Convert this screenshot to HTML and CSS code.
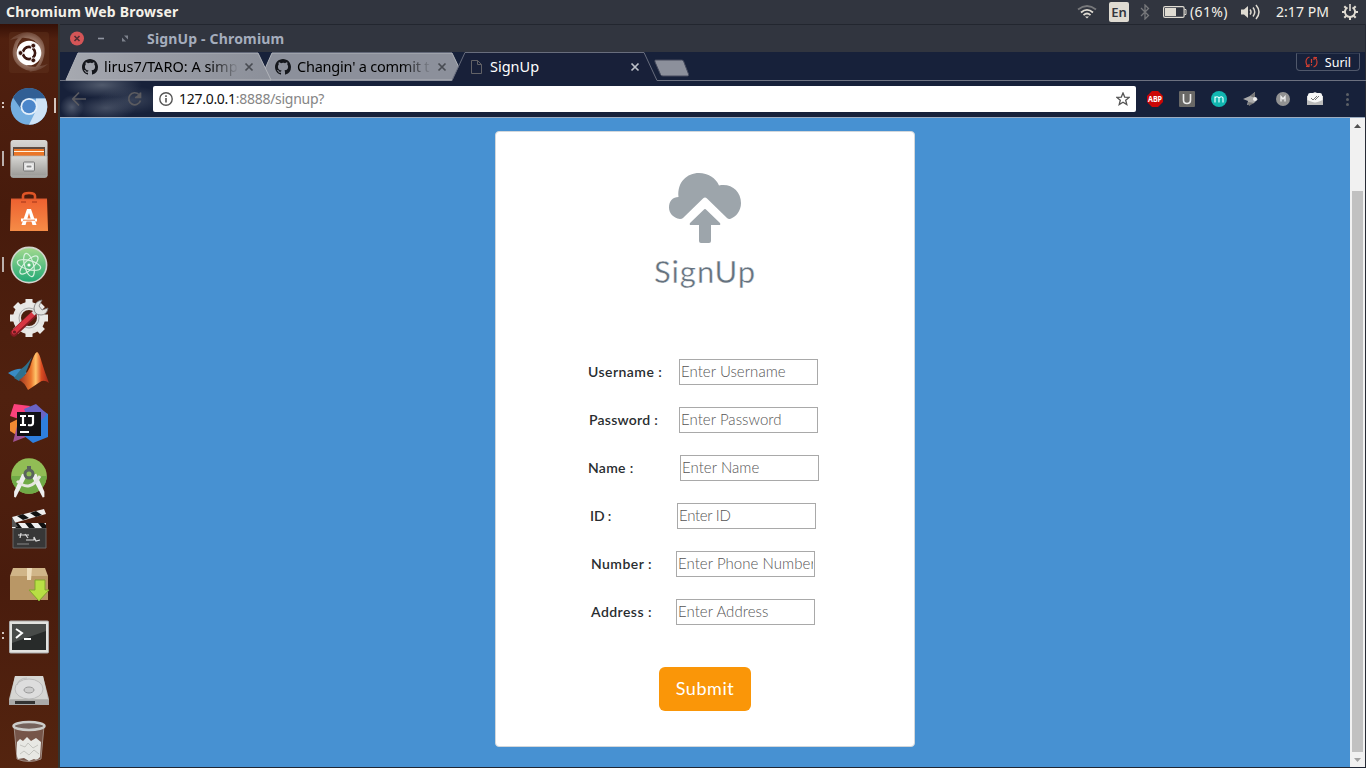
FILE: index.html
```html
<!DOCTYPE html>
<html lang="en">
<head>
<meta charset="utf-8">
<title>SignUp</title>
<link rel="stylesheet" href="styles.css">
</head>
<body>
<div class="desktop">
  <header class="panel">
    <span class="panel-title">Chromium Web Browser</span>
    <div class="tray">
      <svg class="tray-wifi" width="20" height="14" viewBox="0 0 20 14" fill="none" stroke-width="1.8"><path d="M1 4.5Q10-2.5 19 4.5" stroke="#77787b"/><path d="M4 7.5Q10 2.2 16 7.5M6.5 10.1Q10 7 13.500 10.100" stroke="#dfdbd2"/><path d="M8 11.500h4L10 13.500z" fill="#dfdbd2"/></svg>
      <span class="lang">En</span>
      <svg class="tray-bt" width="10" height="16" viewBox="0 0 10 16" fill="none" stroke="#77787b" stroke-width="1.300"><path d="M1 4l7.500 7.500L5 15V1l3.500 3.500L1 12"/></svg>
      <svg class="tray-bat" width="24" height="12" viewBox="0 0 24 12"><rect x=".6" y=".6" width="20.500" height="10.800" rx="1.500" fill="none" stroke="#dfdbd2" stroke-width="1.200"/><path d="M2 2h11v8H2z" fill="#dfdbd2"/><path d="M21.500 3.500H23v5h-1.500" fill="none" stroke="#dfdbd2"/></svg>
      <span class="percent">(61%)</span>
      <svg class="tray-vol" width="20" height="16" viewBox="0 0 20 16" fill="none" stroke="#dfdbd2" stroke-width="1.500"><path d="M0 5.500h3L7 2v12L3 10.500H0z" fill="#dfdbd2" stroke="none"/><path d="M9 5.500q2 2.500 0 5M12 3.500q3.500 4.500 0 9M15 1q6 7 0 14"/></svg>
      <span class="clock">2:17 PM</span>
      <svg class="tray-gear" width="16" height="16" viewBox="0 0 16 16" fill="none" stroke="#dfdbd2"><path d="M5.500 3.500a5.100 5.100 0 1 0 5 0" stroke-width="2"/><path d="M8 0v7" stroke-width="1.600"/><path d="M0 8h3M13 8h3M8 13v3M2.300 2.300l2 2M13.700 2.300l-2 2M2.300 13.700l2-2M13.700 13.700l-2-2" stroke-width="2"/></svg>
    </div>
  </header>

  <div class="workspace">
    <nav class="dock">
      <svg viewBox="0 0 60 53"><defs><radialGradient id="swirl"><stop offset=".5" stop-color="#b79989"/><stop offset="1" stop-color="#704838"/></radialGradient></defs><rect x="9" y="6" width="40" height="41" rx="3" fill="#653721" opacity=".4"/><path d="M10 14Q25 1 38 10Q48 18 43 34Q40 44 29 46Q44 37 40 22Q34 7 10 14M48 38Q34 50 22 42Q9 34 14 19Q17 9 28 7Q13 17 18 31Q25 46 48 38" fill="url(#swirl)" opacity=".9"/><circle cx="29" cy="27" r="12.300" fill="#fff"/><circle cx="29" cy="27" r="6" fill="none" stroke="#3b1710" stroke-width="2.800"/><path d="M29 27L21 27M29 27l4-7M29 27l4 7" stroke="#fff" stroke-width="1.300"/><circle cx="29" cy="27" r="4.500" fill="#fff"/><g fill="#3b1710" stroke="#fff" stroke-width=".8"><circle cx="20.500" cy="27" r="2.400"/><circle cx="33.300" cy="19.700" r="2.400"/><circle cx="33.300" cy="34.300" r="2.400"/></g></svg>
      <svg viewBox="0 0 60 53"><circle cx="29" cy="27.500" r="18.300" fill="#74aee0"/><path d="M13 18.500A18.300 18.300 0 0 1 45.500 19.500H29L22 31.500z" fill="#315f94"/><path d="M45.500 19.500A18.300 18.300 0 0 1 29 45.700L36 31.500V19.500z" fill="#cfe3f6"/><circle cx="29" cy="27.500" r="8.600" fill="#e4effa"/><circle cx="29" cy="27.500" r="6.800" fill="#4b86ca"/><path d="M2 23h2v2H2zM2 27h2v2H2zM54 19h2v15h-2z" fill="#d3c5be"/></svg>
      <svg viewBox="0 0 60 53"><defs><linearGradient id="metal" x2="0" y2="1"><stop stop-color="#d8d7d4"/><stop offset="1" stop-color="#9b9a97"/></linearGradient></defs><rect x="10.500" y="8" width="37" height="38" rx="3" fill="url(#metal)"/><path d="M13 15h32v9H13z" fill="#5d4b42"/><path d="M14 17h30v2H14zM14 20h30v5H14z" fill="#ea7628"/><path d="M14 19.500h30" stroke="#fff2df"/><path d="M11 24h36v20H11z" fill="url(#metal)" stroke="#b5b5b2" stroke-width=".7"/><rect x="23.500" y="30" width="11" height="9" rx="1" fill="#ddd" stroke="#777"/><path d="M26 33h6v3h-6z" fill="#888" stroke="#fff"/><path d="M2 19h2v15H2z" fill="#bbb0ac"/></svg>
      <svg viewBox="0 0 60 53"><defs><linearGradient id="bag" x2="0" y2="1"><stop stop-color="#ee6130"/><stop offset="1" stop-color="#f58c47"/></linearGradient></defs><path d="M23 16V11q0-3 6-3t6 3v5" fill="none" stroke="#df5527" stroke-width="2.600"/><path d="M11 14h36l1 32H10z" fill="url(#bag)"/><path d="M11 14h36" stroke="#d55930"/><path d="M21 17h5M32 17h5" stroke="#bc4422" stroke-width="1.500"/><path d="M21.500 40l5.500-16h4l5.500 16h-4L29 28l-3.500 12z" fill="#fff"/><path d="M21 35h16" stroke="#fff" stroke-width="3"/><path d="M23 35.200h12" stroke="#f07b40"/></svg>
      <svg viewBox="0 0 60 53"><defs><linearGradient id="atom" x2="0" y2="1"><stop stop-color="#a3da8f"/><stop offset="1" stop-color="#20a875"/></linearGradient></defs><circle cx="29" cy="27" r="17.600" fill="url(#atom)" stroke="#d3d5ce" stroke-width="1.600"/><g fill="none" stroke="#d8f1df" stroke-width="1.200"><ellipse cx="29" cy="27" rx="12" ry="4.500" transform="rotate(15 29 27)"/><ellipse cx="29" cy="27" rx="12" ry="4.500" transform="rotate(75 29 27)"/><ellipse cx="29" cy="27" rx="12" ry="4.500" transform="rotate(135 29 27)"/></g><circle cx="29" cy="27" r="1.600" fill="#fff"/><path d="M2 19h2v15H2z" fill="#bbb0ac"/></svg>
      <svg viewBox="0 0 60 53"><circle cx="29" cy="27" r="12" fill="none" stroke="#e5e5e3" stroke-width="8"/><path d="M25.500 8h7v8h-7zM25.500 38h7v8h-7zM10 23.500h8v7h-8zM40 23.500h8v7h-8z" fill="#e9e9e7"/><path d="M25.500 8h7v8h-7zM25.500 38h7v8h-7zM10 23.500h8v7h-8zM40 23.500h8v7h-8z" fill="#e9e9e7" transform="rotate(45 29 27)"/><circle cx="29" cy="27" r="10" fill="none" stroke="#aaa"/><path d="M14 42L33 24" stroke="#851b22" stroke-width="7" stroke-linecap="round"/><path d="M14 41L33 23" stroke="#d73542" stroke-width="4.500" stroke-linecap="round"/><path d="M33 23l6-6" stroke="#d5d5d2" stroke-width="4"/><path d="M42 9l-3 6 3 4 6-2q-1 7-7 7-7 0-7-7 1-7 8-8" fill="#e2e2df" stroke="#777" stroke-width=".8"/><circle cx="14.500" cy="41" r="1.600" fill="#6d1b20"/></svg>
      <svg viewBox="0 0 60 53"><defs><linearGradient id="peak"><stop stop-color="#9b3422"/><stop offset=".4" stop-color="#eb762d"/><stop offset=".56" stop-color="#ffc36a"/><stop offset=".75" stop-color="#db4d22"/><stop offset="1" stop-color="#9a251c"/></linearGradient></defs><path d="M8 29q9-5 14-4l5 4-8 7z" fill="#398bc4"/><path d="M21 25q5-3 11-12l-8 20-5 4-5-3z" fill="#2f718e"/><path d="M19 36q7-4 11-13 4-14 7-15 2 0 5 11 3 10 7 20-5-4-9-1L28 46q-4-8-9-10" fill="url(#peak)"/></svg>
      <svg viewBox="0 0 60 53"><path d="M14 7l16 2-8 14-12-4z" fill="#fa427c"/><path d="M10 26l14-7-6 20-8-5z" fill="#f38a32"/><path d="M13 45l5-20 13 13z" fill="#9e5293"/><path d="M34 8l14 9v23l-15 6-10-8z" fill="#2e7fdf"/><path d="M36 7l11 10-14 16-9-21z" fill="#6963c5"/><path d="M17 15h24v24H17z" fill="#101014"/><g fill="none" stroke="#fff" stroke-width="2.200"><path d="M20 19h6M23 19v9M20 28h6M28 19h5v7q0 3-5 2"/></g><path d="M20 34h9v2h-9z" fill="#fff"/></svg>
      <svg viewBox="0 0 60 53"><circle cx="29" cy="26" r="17.800" fill="#91bd55"/><path d="M11.200 26a17.800 17.800 0 0 0 35.600 0z" fill="#70aa47"/><path d="M25.500 26L15 47v-5l8-18M32.500 26l11 21v-5l-8-18" fill="#eee" stroke="#eee" stroke-width="1.800"/><path d="M17 31q13 12 23-5" fill="none" stroke="#e6e6df" stroke-width="3"/><circle cx="29" cy="24" r="4" fill="none" stroke="#5a625d" stroke-width="3"/><path d="M27 16h4v5h-4z" fill="#5a625d"/></svg>
      <svg viewBox="0 0 60 53"><path d="M13 25h33v20H13z" fill="#373737" stroke="#666"/><path d="M12 20h34v5H12z" fill="#eee"/><path d="M12 20l4 5h6l-4-5M25 20l4 5h6l-4-5M38 20l4 5h4v-3l-2-2" fill="#111"/><path d="M12 14l32-8 2 5-32 9z" fill="#eee"/><path d="M17 13l6 4 6-2-6-4M30 10l6 4 6-2-6-4" fill="#111"/><path d="M12 14l6 10h-6z" fill="#555"/><path d="M18 32h11M21 30l-1 5M25 31l3 4M26 37h8v-3l2 4 4-1" stroke="#ddd" fill="none" stroke-width="1.200"/><path d="M17 41h12" stroke="#888"/></svg>
      <svg class="installer" viewBox="0 0 60 53"><path d="M10 16h38v24H10z" fill="#b99766"/><path d="M13 8h32l3 8H10z" fill="#d0b588"/><path d="M27 8h5l-1 12h-4z" fill="#eddcba"/><path d="M35 20h10v10h4L39 41 29 30h6z" fill="#b8df44" stroke="#81a52d"/></svg>
      <svg viewBox="0 0 60 53"><rect x="9.500" y="12" width="39" height="32" rx="1" fill="#e2e2df" stroke="#aaa"/><path d="M12 15h34v26H12z" fill="#282b2a"/><path d="M12 15h34v7L12 34z" fill="#484b49"/><path d="M16 20l6 4-6 5M24 30h7" fill="none" stroke="#fff" stroke-width="2"/><path d="M2 23h2v2H2zM2 28h2v2H2z" fill="#d3c5be"/></svg>
      <svg viewBox="0 0 60 53"><path d="M15 14h28l6 23v6H9v-6z" fill="#b6b6b3"/><path d="M15 14h28l5 23H10z" fill="#d6d6d3"/><path d="M9 38h40v5H9z" fill="#aaa"/><path d="M15 39h20v3H15z" fill="#333"/><ellipse cx="29" cy="27" rx="14" ry="10" fill="#ddd" stroke="#bbb"/><ellipse cx="29" cy="28" rx="5" ry="3" fill="#ccc" stroke="#999"/><path d="M17 23q2-7 10-7" fill="none" stroke="#bbb"/></svg>
      <svg viewBox="0 0 60 53"><path d="M14 11l3 33q12 5 24 0l3-33" fill="#765549" stroke="#9f8c83"/><path d="M17 27l3-3 3 2 4-4 4 4 5-3 5 4-1 15q-3 4-6 2l-5 2-5-3-6 1q-2-2-1-17" fill="#e8e8e4"/><path d="M20 30l5 2 3-4 5 5 5-3M20 39l4-3 5 4 5-5 5 4" fill="none" stroke="#c4c4bf"/><ellipse cx="29" cy="11" rx="15.500" ry="4" fill="#75625b" stroke="#cdcdca" stroke-width="2.500"/></svg>
    </nav>

    <main class="window">
      <div class="titlebar">
        <svg class="window-controls" width="60" height="16" viewBox="0 0 60 16"><circle cx="7" cy="7.500" r="7" fill="#d45557"/><path d="M4.500 5l5 5M9.500 5l-5 5" stroke="#512e34" stroke-width="1.600"/><path d="M28 7.500h6" stroke="#9095a0" stroke-width="1.600"/><path d="M54 4.500h4v4zM52 6.500v4h4z" fill="#7d828c"/></svg>
        <span class="window-title">SignUp - Chromium</span>
      </div>
      <div class="tabstrip">
        <svg class="tab-shapes" width="1306" height="29" viewBox="0 0 1306 29"><defs><linearGradient id="tabfill"><stop stop-color="#a6a9b0"/><stop offset=".35" stop-color="#9a9da6"/><stop offset="1" stop-color="#8c909a"/></linearGradient></defs><path d="M0 28.500h392M597 28.500h709" stroke="#6c7180"/><path d="M200 28L212 1h180l13 27z" fill="#8c909b" stroke="#b0b3b9"/><path d="M6 28L18 1h180l13 27z" fill="url(#tabfill)" stroke="#b0b3b9"/><path d="M392 29L405 .5h179L597 29z" fill="#182039"/><path d="M392 28.500L405 .5h179l13 28" fill="none" stroke="#686d7d"/><path d="M595.500 8h26q1.500 0 2 1l5 13q.5 2-1 2H603q-2 0-2.500-1.500L595 10q-.5-2 .5-2" fill="#8c909b" stroke="#464b5d"/></svg>
        <div class="tab tab-one"><svg width="16" height="16" viewBox="0 0 16 16"><path fill="#15171c" d="M8 0C3.580 0 0 3.580 0 8c0 3.540 2.290 6.530 5.470 7.590.4.070.55-.17.55-.38v-1.490c-2.010.37-2.530-.49-2.690-.94-.09-.23-.48-.94-.82-1.130-.28-.15-.68-.52-.01-.53.63-.01 1.080.58 1.230.82.72 1.210 1.870.87 2.330.66.070-.52.280-.87.510-1.070-1.780-.2-3.640-.89-3.640-3.950 0-.87.310-1.590.82-2.150-.08-.2-.36-1.020.08-2.120 0 0 .67-.21 2.200.82A7.600 7.600 0 0 1 8 3.860c.68 0 1.360.09 2 .27 1.530-1.040 2.200-.82 2.200-.82.44 1.100.16 1.920.08 2.120.51.56.82 1.270.82 2.150 0 3.070-1.870 3.750-3.650 3.950.29.250.54.730.54 1.480v2.200c0 .21.150.46.550.38A8 8 0 0 0 16 8c0-4.420-3.580-8-8-8z"/></svg><span class="tab-label fade">lirus7/TARO: A simp</span><svg class="tab-close" width="10" height="10" viewBox="0 0 10 10"><path d="M1.500 1.500l7 7M8.500 1.500l-7 7"/></svg></div>
        <div class="tab tab-two"><svg width="16" height="16" viewBox="0 0 16 16"><path fill="#15171c" d="M8 0C3.580 0 0 3.580 0 8c0 3.540 2.290 6.530 5.470 7.590.4.070.55-.17.55-.38v-1.490c-2.010.37-2.530-.49-2.690-.94-.09-.23-.48-.94-.82-1.130-.28-.15-.68-.52-.01-.53.63-.01 1.080.58 1.230.82.72 1.210 1.870.87 2.330.66.070-.52.280-.87.510-1.070-1.780-.2-3.640-.89-3.640-3.950 0-.87.310-1.590.82-2.150-.08-.2-.36-1.020.08-2.120 0 0 .67-.21 2.200.82A7.600 7.600 0 0 1 8 3.860c.68 0 1.360.09 2 .27 1.530-1.040 2.200-.82 2.200-.82.44 1.100.16 1.920.08 2.120.51.56.82 1.270.82 2.150 0 3.070-1.870 3.750-3.650 3.950.29.250.54.730.54 1.480v2.200c0 .21.150.46.550.38A8 8 0 0 0 16 8c0-4.420-3.580-8-8-8z"/></svg><span class="tab-label fade changin">Changin' a commit t</span><svg class="tab-close" width="10" height="10" viewBox="0 0 10 10"><path d="M1.500 1.500l7 7M8.500 1.500l-7 7"/></svg></div>
        <div class="tab tab-active"><svg width="16" height="16" viewBox="0 0 16 16"><path d="M3.500 1.500h6l4 4v9h-10zM9.500 1.500v4h4" fill="none" stroke="#626267"/></svg><span class="tab-label signup-label">SignUp</span><svg class="tab-close light" width="10" height="10" viewBox="0 0 10 10"><path d="M1.500 1.500l7 7M8.500 1.500l-7 7"/></svg></div>
        <div class="profile"><svg width="13" height="12" viewBox="0 0 13 12" fill="none" stroke="#d13e31" stroke-width="1.200"><path d="M4.500 1Q1 2 1 6q0 3 2.500 5M1 10.500h3V8M8.500 11q3.500-1 3.500-5 0-3-2.500-5M12 1.500H9V4M6.500 3v4M6.500 8v1.500"/></svg><span>Suril</span></div>
      </div>
      <div class="toolbar">
        <svg class="nav-buttons" width="76" height="20" viewBox="0 0 76 20" fill="none" stroke="#5b5b60" stroke-width="1.700"><path d="M14 10H1M7 3.500L.8 10 7 16.500"/><path d="M67 5.500a6 6 0 1 0 1.500 6"/><path d="M68.500 3.500v5H63" fill="#5b5b60"/></svg>
        <div class="omnibox">
          <svg width="14" height="14" viewBox="0 0 14 14"><circle cx="7" cy="7" r="6.200" fill="none" stroke="#555" stroke-width="1.400"/><path d="M6.200 6h1.600v4.500H6.200zM6.200 3.300h1.600V5H6.200z" fill="#555"/></svg>
          <span class="url"><b>127.0.0.1</b>:8888/signup?</span>
          <svg class="star" width="14" height="14" viewBox="0 0 14 14"><path d="M7 1l1.700 4.100 4.400.3-3.400 2.800 1.100 4.300L7 10.200l-3.800 2.300 1.100-4.300L.9 5.400l4.400-.3z" fill="none" stroke="#555" stroke-width="1.300"/></svg>
        </div>
        <div class="extensions">
          <svg viewBox="0 0 16 16"><path d="M5 0h6l5 5v6l-5 5H5l-5-5V5z" fill="#cb0606"/><text x="1" y="10.900" font-size="8" font-weight="700" fill="#fff" textLength="14" lengthAdjust="spacingAndGlyphs">ABP</text></svg>
          <svg viewBox="0 0 16 16"><rect width="16" height="16" rx="1" fill="#696866"/><path d="M4.500 3v6q0 3.500 3.500 3.500t3.500-3.500V3" fill="none" stroke="#eee" stroke-width="1.600"/></svg>
          <svg viewBox="0 0 16 16"><circle cx="8" cy="8" r="8" fill="#11b6b0"/><path d="M4 11.500V5.500M4 7q2-2.500 4 0v4.500M8 7q3-2.500 4 0v4.500" fill="none" stroke="#e2ffff" stroke-width="1.200"/></svg>
          <svg viewBox="0 0 16 16"><path d="M0 8l7-3 5-4v6l3 1-4 4-7 2 1-4z" fill="#aaa"/><path d="M7 5l5-4v6zM5 11l6 1-5 3z" fill="#777"/><circle cx="12" cy="8" r="2" fill="#eee"/></svg>
          <svg viewBox="0 0 16 16"><circle cx="8" cy="8" r="7" fill="#929292"/><path d="M6 10.500v-5L8 8l2-2.500v5" fill="none" stroke="#eee" stroke-width="1.300"/></svg>
          <svg viewBox="0 0 16 16"><path d="M0 5l8-4 8 4v9H0z" fill="#ddd"/><rect x="1" y="2" width="14" height="9" rx="2" fill="#f7f7f7"/><path d="M4 7l2 2 4-4M8 9l4-4" fill="none" stroke="#777"/><path d="M0 9l8 3 8-3v5H0z" fill="#bbb"/></svg>
          <svg viewBox="0 0 16 16" fill="#5c6066"><circle cx="8.500" cy="3.500" r="1.500"/><circle cx="8.500" cy="8.500" r="1.500"/><circle cx="8.500" cy="13.500" r="1.500"/></svg>
        </div>
      </div>
      <div class="viewport">
        <section class="page">
          <form class="card">
            <svg class="cloud" width="72" height="70" viewBox="0 0 72 70" fill="#9da5ab"><path d="M11 46C4 45 0 40 0 34.500 0 28 4 24 9.500 24 8 9 18 0 30 0c9 0 17 5 20 12.500C62 10 72 18 72 30c0 8-5 14-11 16-1 .3-2 0-3-1L38 25.500q-2-2-4 0L14 45q-1 1-3 1z"/><path d="M34.500 37q1.500-1.800 3 0L51 50q1 2-1 2h-8v16q0 2-2 2h-8q-2 0-2-2V52h-8q-2 0-1-2z"/></svg>
            <h1>SignUp</h1>
            <div class="fields">
              <div class="field username"><label>Username :</label><input placeholder="Enter Username"></div>
              <div class="field password"><label>Password :</label><input placeholder="Enter Password"></div>
              <div class="field name"><label>Name :</label><input placeholder="Enter Name"></div>
              <div class="field ident"><label>ID :</label><input placeholder="Enter ID"></div>
              <div class="field number"><label>Number :</label><input placeholder="Enter Phone Number"></div>
              <div class="field address"><label>Address :</label><input placeholder="Enter Address"></div>
            </div>
            <button type="button">Submit</button>
          </form>
        </section>
        <div class="scrollbar"><svg width="15" height="15" viewBox="0 0 15 15"><path d="M4 10l3.500-4L11 10z" fill="#505050"/></svg><div class="track"><div class="thumb"></div></div><svg width="15" height="15" viewBox="0 0 15 15"><path d="M4 6l3.500 4L11 6z" fill="#a3a3a3"/></svg></div>
      </div>
    </main>
  </div>
</div>
</body>
</html>
```
FILE: styles.css
```css
* { box-sizing: border-box; }
body { margin: 0; overflow: hidden; font-family: "Noto Sans", sans-serif; font-size: 14px; }
svg { display: block; flex: none; }
.desktop { width: 1366px; height: 768px; display: flex; flex-direction: column; background: #20242c; }
.panel { height: 24px; display: flex; justify-content: space-between; align-items: center; padding: 0 8px 0 6px; color: #f4f1e9; background: #31353f; white-space: nowrap; }
.panel-title { margin-top: -2px; font-size: 14px; font-weight: 700; letter-spacing: .2px; }
.tray { display: flex; align-items: center; }
.lang { width: 20px; height: 20px; margin-left: 12px; border-radius: 2px; background: #dfdbd2; color: #33363e; font-size: 13px; font-weight: 600; line-height: 20px; text-align: center; }
.tray-bt { margin-left: 11px; }
.tray-bat { margin-left: 13px; }
.percent { width: 39px; margin: -2px 0 0 3px; letter-spacing: .35px; }
.tray-vol { margin-left: 12px; }
.clock { width: 53px; margin: -2px 0 0 15px; letter-spacing: .05px; }
.tray-gear { margin-left: 13px; }
.workspace { flex: 1; min-height: 0; display: flex; }
.dock { width: 60px; padding-top: 2px; display: flex; flex-direction: column; background: linear-gradient(90deg, transparent 58px, #333431 58px), linear-gradient(#351006, #50200f 2%, #471b0c 25%, #50210f 50%, #491c0d 75%, #54240f); }
.dock svg { width: 60px; height: 53px; }
.dock .installer { padding-top: 4px; margin-bottom: -4px; height: 57px; }
.window { flex: 1; display: flex; flex-direction: column; min-width: 0; border-right: 1px solid #272b35; border-bottom: 1px solid #202633; background: radial-gradient(ellipse 40px 13px at 42px 61px, #666f7fbb, transparent), radial-gradient(ellipse 12px 12px at 12px 83px, #6b7485aa, transparent), radial-gradient(ellipse 30px 12px at 46px 84px, #5a6375aa, transparent), radial-gradient(ellipse 34px 14px at 72px 76px, #485266aa, transparent), #17213a; }
.titlebar { height: 28px; flex: none; display: flex; align-items: center; padding: 0 10px; border-top: 1px solid #22262f; background: #31353f; color: #a5adbd; font-weight: 700; }
.window-title { margin: -1px 0 0 17px; letter-spacing: .17px; }
.tabstrip { position: relative; height: 29px; flex: none; display: flex; align-items: center; padding-left: 22px; }
.tab-shapes { position: absolute; inset: 0; }
.tab { position: relative; display: flex; align-items: center; height: 29px; }
.tab-one { width: 193px; }
.tab-two { width: 193px; }
.tab-active { width: 172px; color: #fff; }
.tab-label { width: 133px; margin: -1px 0 0 6px; overflow: hidden; white-space: nowrap; font-size: 14.500px; line-height: 24px; }
.changin { letter-spacing: -.22px; }
.fade { -webkit-mask-image: linear-gradient(90deg, #000 105px, transparent 135px); mask-image: linear-gradient(90deg, #000 105px, transparent 135px); }
.signup-label { width: 135px; margin-left: 6px; }
.tab-close { margin-left: 7px; stroke: #484b52; stroke-width: 1.700; fill: none; }
.light { stroke: #bbbfc7; margin-left: 5px; }
.profile { position: relative; width: 64px; height: 18px; display: flex; align-items: center; justify-content: space-between; margin: -9px 5px 0 auto; padding: 0 8px; border: 1px solid #50586b; border-top-color: #303a50; border-radius: 0 0 4px 4px; color: #fff; font-size: 12.500px; }
.toolbar { height: 37px; flex: none; display: flex; align-items: center; padding-left: 12px; border-bottom: 1px solid #9cacc0; }
.nav-buttons { margin-right: 5px; }
.omnibox { width: 983px; height: 26px; display: flex; align-items: center; padding: 0 6px; border-radius: 2px; background: #fff; }
.url { margin: -1px 0 0 6px; color: #858585; font-size: 14px; letter-spacing: -.28px; white-space: nowrap; }
.url b { color: #111; font-weight: 400; }
.star { margin-left: auto; }
.extensions { display: flex; gap: 16px; margin-left: 11px; }
.extensions svg { width: 16px; height: 16px; }
.viewport { flex: 1; display: flex; min-height: 0; }
.page { flex: 1; display: flex; justify-content: center; align-items: flex-start; padding-top: 13px; background: #4791d2; }
.card { width: 420px; height: 616px; display: flex; flex-direction: column; align-items: center; border: 1px solid #d2d7db; border-radius: 4px; background: #fff; font-family: Lato, sans-serif; }
.cloud { margin-top: 41px; }
h1 { height: 38px; margin: 10px 0 0; color: #65727e; font-size: 31px; line-height: 37px; font-weight: 400; letter-spacing: .9px; -webkit-text-stroke: .4px #fff; }
.fields { width: 234px; margin-top: 68px; display: flex; flex-direction: column; gap: 22px; }
.field { height: 26px; display: flex; align-items: center; }
label { width: 91px; margin-top: -2px; color: #292d30; font-size: 14px; font-weight: 600; letter-spacing: .45px; white-space: nowrap; }
input { width: 139px; height: 26px; padding: 0 1px 3px; border: 1px solid #a9a9a9; border-radius: 0; outline: 0; background: #fff; font: 300 15px Lato, sans-serif; letter-spacing: .05px; }
input::placeholder { color: #555; opacity: 1; }
.password { padding-left: 1px; }
.password label { width: 90px; letter-spacing: .25px; }
.name label { width: 92px; letter-spacing: .3px; }
.ident { padding-left: 2px; }
.ident label { width: 87px; letter-spacing: -.1px; }
.ident input { letter-spacing: -.3px; }
.number, .address { padding-left: 3px; }
.number label, .address label { width: 85px; }
button { width: 92px; height: 44px; margin-top: 42px; padding: 0 0 2px; border: 0; border-radius: 6px; background: #fa9608; color: #fff; font: 400 18px Lato, sans-serif; letter-spacing: .55px; }
.scrollbar { width: 15px; display: flex; flex-direction: column; background: #f1f1f1; }
.track { flex: 1; padding: 58px 2px 0; }
.thumb { height: 561px; background: #c1c1c1; }
```
